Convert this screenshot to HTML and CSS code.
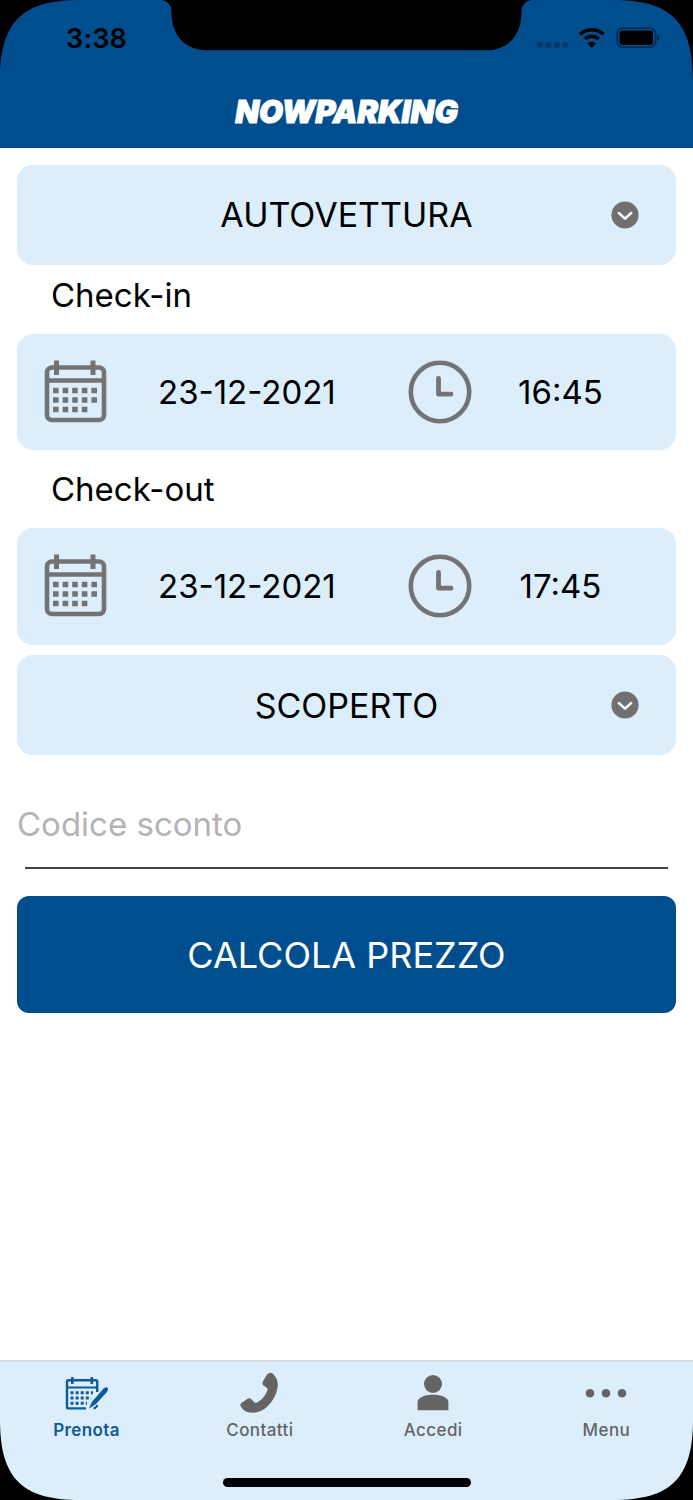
FILE: index.html
```html
<!DOCTYPE html>
<html lang="it">
<head>
  <meta charset="UTF-8">
  <title>NowParking</title>
  <meta name="viewport" content="width=device-width, initial-scale=1.0">
  <link rel="stylesheet" href="styles.css">
</head>
<body>

<!-- shared icons -->
<svg class="sprite" width="0" height="0">
  <symbol id="calendar" viewBox="0 0 64 64">
    <rect x="3" y="7.5" width="57" height="52.5" rx="5" fill="none" stroke="currentColor" stroke-width="4.6"/>
    <path d="M3 20.5H60" stroke="currentColor" stroke-width="4.6"/>
    <path d="M12.5 .5V15M49 .5V15" stroke="currentColor" stroke-width="5"/>
    <path d="M9 30.5H53.5M9 40H53.5M9 49.5H44" stroke="currentColor" stroke-width="5.6" stroke-dasharray="5.6 4"/>
  </symbol>
  <symbol id="clock" viewBox="0 0 64 64">
    <circle cx="32" cy="32" r="29.2" fill="none" stroke="currentColor" stroke-width="4.6"/>
    <path d="M30.5 18.5V34.2H43" fill="none" stroke="currentColor" stroke-width="4.8" stroke-linecap="round" stroke-linejoin="round"/>
  </symbol>
  <symbol id="chevron" viewBox="0 0 28 28">
    <circle cx="14" cy="14" r="13.6" fill="currentColor"/>
    <path d="M7.8 12L14 17.6L20.2 12" fill="none" stroke="#f4fafe" stroke-width="2.5" stroke-linecap="round" stroke-linejoin="round"/>
  </symbol>
</svg>

<div class="phone">
  <header class="header">
    <div class="status-bar">
      <span class="time">3:38</span>
      <svg class="status-icons" width="126" height="26" viewBox="0 0 126 26">
        <g opacity=".25">
          <circle cx="7" cy="18.8" r="3"/>
          <circle cx="15.5" cy="18.8" r="3"/>
          <circle cx="23.8" cy="18.8" r="3"/>
          <circle cx="32.2" cy="18.8" r="3"/>
        </g>
        <g fill="none" stroke="#000" stroke-width="3.7">
          <path d="M47.1 8.4A17 17 0 0 1 70.5 8.4"/>
          <path d="M51.9 13A10.3 10.3 0 0 1 65.7 13"/>
        </g>
        <path d="M54.6 17.3A6.2 6.2 0 0 1 63 17.3L58.8 21.8Z"/>
        <rect x="84.3" y="2.2" width="38.2" height="19" rx="5.5" fill="none" stroke="#000" stroke-width="1.8" opacity=".42"/>
        <rect x="86.6" y="4.6" width="33.4" height="14.4" rx="3"/>
        <path d="M124.3 8.3Q128 11.7 124.3 15.2Z" opacity=".6"/>
      </svg>
    </div>
    <div class="logo">NOWPARKING</div>
  </header>

  <main class="content">
    <div class="select">
      <span class="select-value vehicle">AUTOVETTURA</span>
      <svg class="select-arrow"><use href="#chevron"/></svg>
    </div>

    <div class="field-label">Check-in</div>
    <div class="date-row">
      <svg class="row-icon"><use href="#calendar"/></svg>
      <span class="date">23-12-2021</span>
      <svg class="row-icon"><use href="#clock"/></svg>
      <span class="hour">16:45</span>
    </div>

    <div class="field-label checkout">Check-out</div>
    <div class="date-row">
      <svg class="row-icon"><use href="#calendar"/></svg>
      <span class="date">23-12-2021</span>
      <svg class="row-icon"><use href="#clock"/></svg>
      <span class="hour">17:45</span>
    </div>

    <div class="select parking">
      <span class="select-value place">SCOPERTO</span>
      <svg class="select-arrow"><use href="#chevron"/></svg>
    </div>

    <input class="discount" type="text" placeholder="Codice sconto">
    <div class="divider"></div>

    <button class="submit">CALCOLA PREZZO</button>
  </main>

  <nav class="tab-bar">
    <a class="tab active">
      <svg width="44" height="44" viewBox="0 0 44 44" fill="none" stroke="currentColor">
        <path d="M32.2 20V9.5Q32.2 8.2 30.8 8.2H3.6Q2 8.2 2 9.8V34.7Q2 36.4 3.6 36.4H21" stroke-width="2.4"/>
        <path d="M2 15.5H32" stroke-width="2"/>
        <path d="M7.3 5V12M26.8 5V12" stroke-width="2.6"/>
        <path d="M5.5 20.8H28M5.5 26H26M5.5 31.2H22" stroke-width="3" stroke-dasharray="3 2.1"/>
        <path d="M23.8 36.8L27 29.8L38.6 16.6Q41 14 43 16.3Q43.3 18 42 20L31 32Z" fill="currentColor" stroke="none"/>
        <path d="M28.5 36.4Q31.5 36 32.3 33" stroke-width="2"/>
      </svg>
      <span>Prenota</span>
    </a>
    <a class="tab">
      <svg width="44" height="44" viewBox="0 0 44 44" fill="currentColor">
        <path d="M31.4 1C33.2 .2 34.4 1.1 35.6 2.4C38.5 5.6 40.3 9.5 39.7 14C38.7 22.6 35.2 28.6 29.6 34.2C23.8 39.8 17.2 41.6 10.5 40.3C6.7 39.4 4.3 37 2.7 34.2C2 32.9 2.3 31.8 3.4 30.9L9.2 27C10.7 26 12.2 26 13.5 27.3L16 29.9C16.9 30.9 18.2 31.2 19.6 30.3C24.2 27.5 27.4 23.4 29.3 18.7C29.9 17 29.5 16 28 15.2L25.6 13.6C24.4 12.6 24.2 11.3 24.8 9.8L28.2 3.8C29.1 2.3 30.1 1.5 31.4 1Z"/>
      </svg>
      <span>Contatti</span>
    </a>
    <a class="tab">
      <svg width="44" height="44" viewBox="0 0 44 44" fill="currentColor">
        <circle cx="22" cy="12" r="9"/>
        <path d="M6.6 38.2V30C6.6 25.5 14 22.8 22 22.8S37.4 25.5 37.4 30V38.2Z"/>
      </svg>
      <span>Accedi</span>
    </a>
    <a class="tab">
      <svg width="44" height="44" viewBox="0 0 44 44" fill="currentColor">
        <circle cx="6" cy="21.2" r="4.3"/>
        <circle cx="22" cy="21.2" r="4.3"/>
        <circle cx="38" cy="21.2" r="4.3"/>
      </svg>
      <span>Menu</span>
    </a>
    <div class="home-indicator"></div>
  </nav>

  <!-- notch and rounded corners of the device -->
  <svg class="bezel" width="693" height="1500" viewBox="0 0 693 1500">
    <path d="M161 0Q171 1 171.3 11C171.5 36 185 50.3 208 50.3H485C508 50.3 521.5 36 521.7 11Q522 1 532 0Z"/>
    <path d="M0 0H80C22 0 0 22 0 80Z"/>
    <path d="M693 0H613C671 0 693 22 693 80Z"/>
    <path d="M0 1500H80C22 1500 0 1478 0 1420Z"/>
    <path d="M693 1500H613C671 1500 693 1478 693 1420Z"/>
  </svg>
</div>

</body>
</html>
```
FILE: styles.css
```css
* {
  box-sizing: border-box;
}

body {
  margin: 0;
  background: white;
  font-family: Inter, "Liberation Sans", sans-serif;
  color: #000;
}

.sprite {
  position: absolute;
}

.phone {
  position: relative;
  display: flex;
  flex-direction: column;
  width: 693px;
  height: 1500px;
  overflow: hidden;
}

.bezel {
  position: absolute;
  top: 0;
  left: 0;
  pointer-events: none;
}

/* header */
.header {
  height: 147.5px;
  background: #004e8e;
}

.status-bar {
  display: flex;
  justify-content: space-between;
  align-items: center;
  height: 76px;
  padding: 0 34px 0 66px;
}

.time {
  font-size: 27px;
  font-weight: 600;
  letter-spacing: 0.2px;
}

.status-icons {
  margin-top: 1px;
}

.logo {
  height: 72px;
  line-height: 72px;
  text-align: center;
  color: white;
  font-size: 31px;
  font-weight: 900;
  font-style: italic;
  -webkit-text-stroke: 1px white;
}

/* booking form */
.content {
  flex: 1;
  padding: 17px 17px 0;
}

.select {
  display: flex;
  align-items: center;
  height: 100px;
  padding: 0 37px 0 65px;
  border-radius: 16px;
  background: #dceefb;
}

.select-value {
  flex: 1;
  text-align: center;
  font-size: 34px;
}

.select-arrow {
  width: 28px;
  height: 28px;
  color: #707070;
}

.field-label {
  height: 69px;
  padding-left: 34px;
  line-height: 61px;
  font-size: 33px;
}

.field-label.checkout {
  height: 78px;
  line-height: 78px;
}

.date-row {
  display: grid;
  grid-template-columns: 64px 300px 64px 1fr;
  align-items: center;
  height: 116.5px;
  padding: 0 27px;
  border-radius: 16px;
  background: #dceefb;
  font-size: 33px;
}

.row-icon {
  width: 64px;
  height: 64px;
  color: #737373;
}

.date {
  padding-left: 50px;
}

.hour {
  text-align: center;
}

.parking {
  margin-top: 10.5px;
}

.discount {
  display: block;
  width: 100%;
  height: 60px;
  margin-top: 39px;
  padding: 0;
  border: none;
  outline: none;
  font-family: inherit;
  font-size: 33px;
}

.discount::placeholder {
  color: #b4b4b4;
}

.divider {
  height: 2px;
  margin: 13px 8px 27px;
  background: #444;
}

.submit {
  display: block;
  width: 100%;
  height: 117px;
  border: none;
  border-radius: 12px;
  background: #004e8e;
  color: white;
  font-family: inherit;
  font-size: 36px;
}

/* bottom navigation */
.tab-bar {
  position: relative;
  display: grid;
  grid-template-columns: repeat(4, 1fr);
  height: 140px;
  border-top: 2px solid #d5dde2;
  background: #dceefb;
}

.tab {
  display: flex;
  flex-direction: column;
  align-items: center;
  padding-top: 10px;
  color: #646464;
  font-size: 17px;
  font-weight: 500;
  letter-spacing: 0.4px;
}

.tab span {
  margin-top: 4px;
}

.tab.active {
  color: #0e5a9c;
  font-weight: 600;
}

.home-indicator {
  position: absolute;
  bottom: 13.5px;
  left: 222.5px;
  width: 248px;
  height: 8.5px;
  border-radius: 5px;
  background: #000;
}
```
